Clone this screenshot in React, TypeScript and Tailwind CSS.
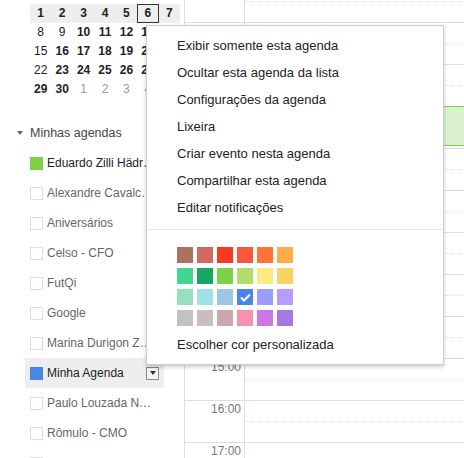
import { Fragment } from 'react'

const weeks: [string, boolean, boolean][][] = [
  [['1', true, false], ['2', true, false], ['3', true, false], ['4', true, false], ['5', true, false], ['6', true, false], ['7', true, false]],
  [['8', false, false], ['9', false, false], ['10', true, false], ['11', true, false], ['12', true, false], ['13', true, false], ['14', false, false]],
  [['15', false, false], ['16', true, false], ['17', true, false], ['18', true, false], ['19', true, false], ['20', true, false], ['21', false, false]],
  [['22', false, false], ['23', true, false], ['24', true, false], ['25', true, false], ['26', true, false], ['27', true, false], ['28', false, false]],
  [['29', true, false], ['30', true, false], ['1', false, true], ['2', false, true], ['3', false, true], ['4', false, true], ['5', false, true]],
]

const calendars = [
  { name: 'Eduardo Zilli Hädrich', color: '#7bd148' },
  { name: 'Alexandre Cavalcanti' },
  { name: 'Aniversários' },
  { name: 'Celso - CFO' },
  { name: 'FutQi' },
  { name: 'Google' },
  { name: 'Marina Durigon Zanella' },
  { name: 'Minha Agenda', color: '#4986e7', active: true },
  { name: 'Paulo Louzada Nogueira' },
  { name: 'Rômulo - CMO' },
  { name: 'Tarefas e reuniões' },
]

const menuItems = [
  'Exibir somente esta agenda',
  'Ocultar esta agenda da lista',
  'Configurações da agenda',
  'Lixeira',
  'Criar evento nesta agenda',
  'Compartilhar esta agenda',
  'Editar notificações',
]

const swatches = [
  ['#ac725e', '#d06b64', '#f83a22', '#fa573c', '#ff7537', '#ffad46'],
  ['#42d692', '#16a765', '#7bd148', '#b3dc6c', '#fbe983', '#fad165'],
  ['#92e1c0', '#9fe1e7', '#9fc6e7', '#4986e7', '#9a9cff', '#b99aff'],
  ['#c2c2c2', '#cabdbf', '#cca6ac', '#f691b2', '#cd74e6', '#a47ae2'],
]

const hours = [6, 7, 8, 9, 10, 11, 12, 13, 14, 15, 16, 17]

function MiniCalendar() {
  return (
    <div className="ml-[30px] mt-[4px] grid w-[150px] grid-cols-7 text-[12px] leading-[19px]">
      {weeks.map((week, w) => (
        <Fragment key={w}>
          {week.map(([d, bold, other], i) => (
            <div
              key={i}
              className={`h-[19px] text-center ${w === 0 ? 'bg-[#eeeeee]' : ''} ${bold ? 'font-bold' : ''} ${other ? 'text-[#999]' : 'text-[#222]'} ${w === 0 && i === 5 ? 'outline outline-1 -outline-offset-1 outline-[#333]' : ''}`}
            >
              {d}
            </div>
          ))}
        </Fragment>
      ))}
    </div>
  )
}

function Sidebar() {
  return (
    <aside className="w-[185px] shrink-0 border-r border-[#dddddd]">
      <MiniCalendar />

      {/* Minhas agendas */}
      <div className="mt-[19px] flex h-[30px] items-center pl-[17px] text-[12.5px] text-[#444]">
        <span className="h-0 w-0 border-x-[3.5px] border-t-[4px] border-x-transparent border-t-[#666]" />
        <span className="ml-[7px]">Minhas agendas</span>
      </div>

      <ul>
        {calendars.map((c) => (
          <li
            key={c.name}
            className={`ml-[25px] flex h-[30px] w-[139px] items-center pl-[5px] pr-[5px] text-[12px] ${c.active ? 'bg-[#eeeeee]' : ''}`}
          >
            {c.color ? (
              <span className="h-[13px] w-[13px] shrink-0" style={{ backgroundColor: c.color }} />
            ) : (
              <span className="h-[13px] w-[13px] shrink-0 border border-[#dddddd] bg-white" />
            )}
            <span className={`ml-[4px] max-w-[110px] truncate ${c.color ? 'text-[#222]' : 'text-[#666]'}`}>{c.name}</span>
            {c.active && (
              <span className="ml-auto flex h-[13px] w-[13px] items-center justify-center border border-[#888] bg-[#f4f4f4]">
                <span className="h-0 w-0 border-x-[3.5px] border-t-[4px] border-x-transparent border-t-[#333]" />
              </span>
            )}
          </li>
        ))}
      </ul>
    </aside>
  )
}

function Gutter() {
  return (
    <div className="w-[60px] shrink-0 border-r border-[#dddddd]">
      <div className="-mt-[20px]">
        {hours.map((h) => (
          <div key={h} className="h-[42px] border-t border-[#dddddd] pr-[3px] pt-[2px] text-right text-[12px] leading-none text-[#777]">
            {h}:00
          </div>
        ))}
      </div>
    </div>
  )
}

function Grid() {
  return (
    <div className="relative flex-1">
      <div className="-mt-[20px]">
        {hours.map((h) => (
          <div key={h} className="h-[42px] border-t border-[#dddddd]">
            <div className="h-[21px] border-b border-dotted border-[#dddddd]" />
          </div>
        ))}
      </div>
      <div className="absolute left-[150px] right-0 top-[106px] h-[40px] border-y border-[#7bd148] bg-[#d9f1cd]" />
    </div>
  )
}

function ContextMenu() {
  return (
    <div className="absolute left-[146px] top-[25px] w-[298px] border border-[#cccccc] bg-white pb-[6px] pt-[6px] text-[13px] text-[#222] shadow-[0_2px_4px_rgba(0,0,0,0.2)]">
      {menuItems.map((m) => (
        <div key={m} className="flex h-[27px] items-center pl-[30px]">
          {m}
        </div>
      ))}
      <div className="my-[8px] h-px bg-[#e5e5e5]" />
      <div className="flex flex-col gap-[5px] pl-[30px] pt-[9px]">
        {swatches.map((row, r) => (
          <div key={r} className="flex gap-[4px]">
            {row.map((col) => (
              <span key={col} className="flex h-[16px] w-[16px] items-center justify-center" style={{ backgroundColor: col }}>
                {col === '#4986e7' && (
                  <svg width="11" height="9" viewBox="0 0 11 9">
                    <path d="M1 4.5 L4 7.5 L10 1.5" fill="none" stroke="white" strokeWidth="2" />
                  </svg>
                )}
              </span>
            ))}
          </div>
        ))}
      </div>
      <div className="mt-[5px] flex h-[27px] items-center pl-[30px]">Escolher cor personalizada</div>
    </div>
  )
}

export default function App() {
  return (
    <div className="relative flex h-[458px] w-[464px] overflow-hidden bg-white font-['Liberation_Sans',Arial,sans-serif]">
      <Sidebar />
      <Gutter />
      <Grid />
      <ContextMenu />
    </div>
  )
}
